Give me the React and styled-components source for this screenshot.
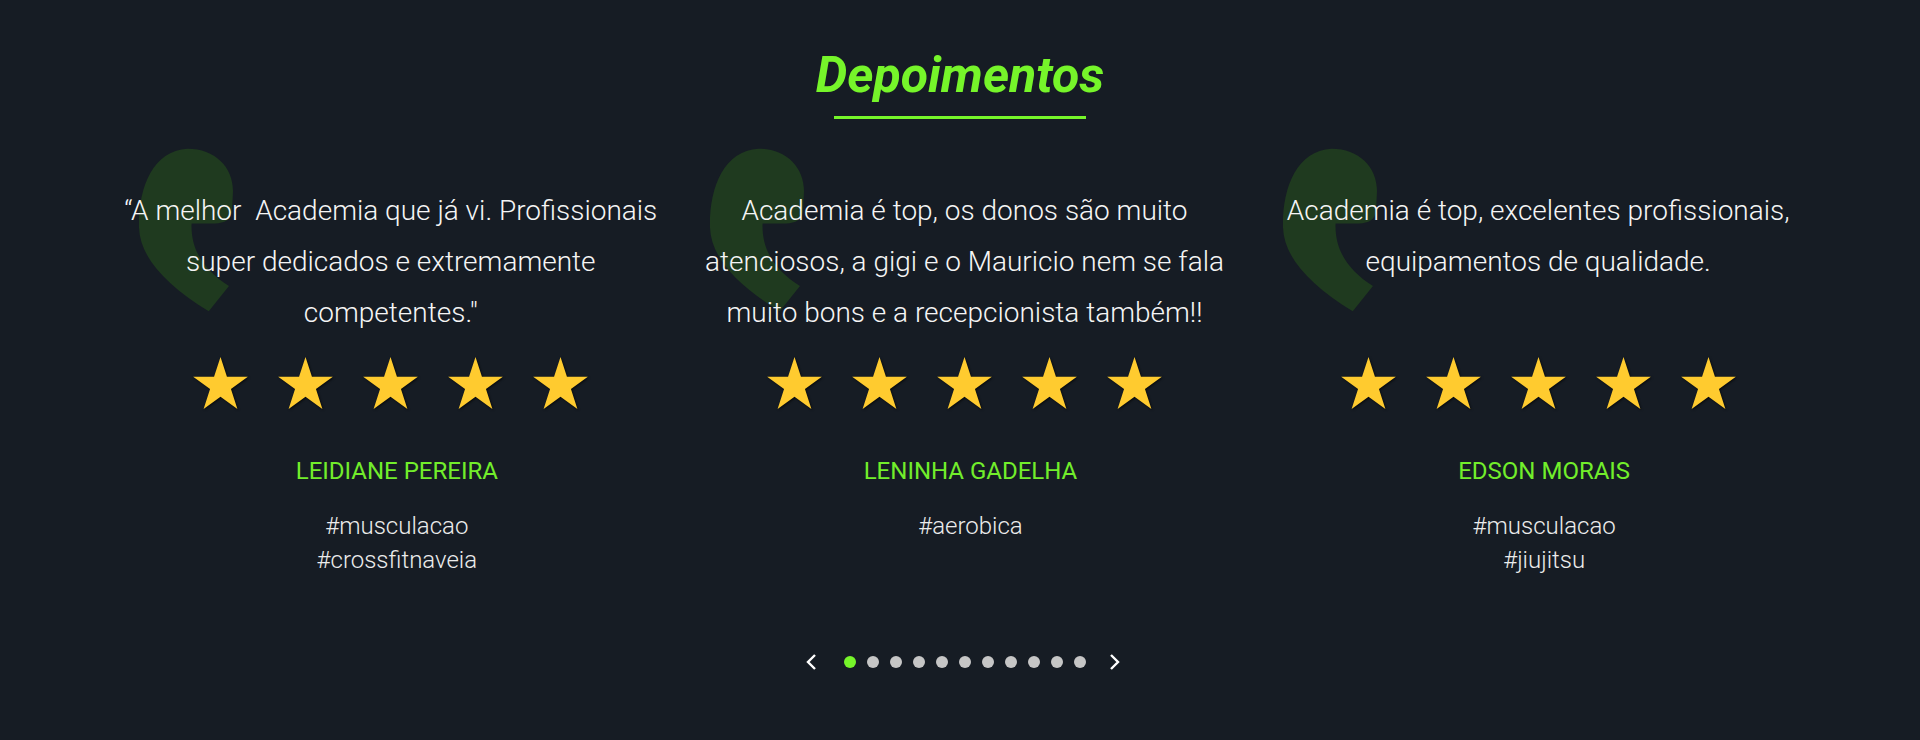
import React from "react";
import styled, { createGlobalStyle } from "styled-components";

const GlobalStyle = createGlobalStyle`
  html, body {
    margin: 0;
    padding: 0;
    background: #161c24;
  }
  body {
    font-family: Roboto, "Liberation Sans", sans-serif;
  }
`;

const Section = styled.section`
  width: 1920px;
  height: 740px;
  background: #161c24;
  box-sizing: border-box;
  padding-top: 47px;
  overflow: hidden;
`;

const Header = styled.div`
  display: flex;
  flex-direction: column;
  align-items: center;
`;

const Title = styled.h2`
  margin: 0;
  font-family: Roboto, sans-serif;
  font-size: 50px;
  line-height: 56px;
  font-weight: 700;
  font-style: italic;
  color: #76f52a;
`;

const Underline = styled.div`
  width: 252px;
  height: 3px;
  margin-top: 13px;
  background: #76f52a;
`;

const Container = styled.div`
  width: 1721px;
  margin-left: 104px;
`;

const Columns = styled.div`
  display: grid;
  grid-template-columns: repeat(3, 1fr);
  margin-top: 66px;
`;

const Card = styled.div`
  position: relative;
  display: flex;
  flex-direction: column;
  align-items: center;
`;

const QuoteMark = styled.svg`
  position: absolute;
  top: -37px;
  left: ${props => props.offset}px;
  width: 95px;
  height: 164px;
  z-index: 0;
`;

const Text = styled.p`
  position: relative;
  z-index: 1;
  margin: 0;
  max-width: 560px;
  min-height: 153px;
  font-size: 28px;
  line-height: 51px;
  font-weight: 300;
  color: #f5f5f5;
  text-align: center;
`;

const Stars = styled.div`
  display: flex;
  gap: 30px;
  margin-top: 19px;
  height: 52px;
`;

const Star = styled.svg`
  width: 55px;
  height: 52px;
  overflow: visible;
  filter: drop-shadow(1px 1px 1px rgba(0, 0, 0, 0.65));
`;

const Author = styled.div`
  display: flex;
  flex-direction: column;
  align-items: center;
  padding-left: 12px;
  margin-top: 48px;
`;

const Name = styled.span`
  font-size: 24px;
  line-height: 28px;
  font-weight: 400;
  color: #72ee2b;
  text-transform: uppercase;
`;

const Tags = styled.div`
  margin-top: 24px;
  display: flex;
  flex-direction: column;
  align-items: center;
`;

const Tag = styled.span`
  font-size: 24px;
  line-height: 34px;
  font-weight: 300;
  color: #ececec;
`;

const Pager = styled.div`
  display: flex;
  justify-content: center;
  align-items: center;
  margin-top: 76px;
  padding-right: 3px;
  height: 18px;
`;

const Arrow = styled.svg`
  width: 12px;
  height: 18px;
  margin: ${props => (props.right ? "0 0 0 23px" : "0 27px 0 0")};
`;

const Dots = styled.div`
  display: flex;
  gap: 11px;
`;

const Dot = styled.span`
  width: 12px;
  height: 12px;
  border-radius: 50%;
  background: ${props => (props.active ? "#76f52a" : "#c6c6c6")};
`;

const testimonials = [
  {
    text: "“A melhor\u00a0 Academia que já vi. Profissionais super dedicados e extremamente competentes.\"",
    name: "Leidiane Pereira",
    tags: ["#musculacao", "#crossfitnaveia"],
    quote: 34,
  },
  {
    text: "Academia é top, os donos são muito atenciosos, a gigi e o Mauricio nem se fala muito bons e a recepcionista também!!",
    name: "Leninha Gadelha",
    tags: ["#aerobica"],
    quote: 31,
  },
  {
    text: "Academia é top, excelentes profissionais, equipamentos de qualidade.",
    name: "Edson Morais",
    tags: ["#musculacao", "#jiujitsu"],
    quote: 31,
  },
];

const StarIcon = () => (
  <Star viewBox="0 0 55 52.3">
    <polygon
      fill="#ffcb2f"
      points="27.5,0 33.99,19.97 55,19.97 38,32.31 44.49,52.28 27.5,39.94 10.51,52.28 17,32.31 0,19.97 21.01,19.97"
    />
  </Star>
);

const Quote = ({ offset }) => (
  <QuoteMark offset={offset} viewBox="0 0 94 161">
    <path
      fill="#1f3a1f"
      d="M49 0 C76 0 94 18 94 42 L93 62 C92 70 86 74 76 74 L53 74 C52 100 65 120 90 136 L70 161 C28 135 2 108 1 78 C0 40 14 2 49 0 Z"
    />
  </QuoteMark>
);

const App = () => (
  <>
    <GlobalStyle />
    <Section>
      <Header>
        <Title>Depoimentos</Title>
        <Underline />
      </Header>
      <Container>
        <Columns>
          {testimonials.map(item => (
            <Card key={item.name}>
              <Quote offset={item.quote} />
              <Text>{item.text}</Text>
              <Stars>
                {[0, 1, 2, 3, 4].map(i => (
                  <StarIcon key={i} />
                ))}
              </Stars>
              <Author>
                <Name>{item.name}</Name>
                <Tags>
                  {item.tags.map(tag => (
                    <Tag key={tag}>{tag}</Tag>
                  ))}
                </Tags>
              </Author>
            </Card>
          ))}
        </Columns>
        <Pager>
          <Arrow viewBox="0 0 12 18">
            <polyline points="10,2 3,9 10,16" fill="none" stroke="#ffffff" strokeWidth="2.4" />
          </Arrow>
          <Dots>
            {Array.from({ length: 11 }).map((_, i) => (
              <Dot key={i} active={i === 0} />
            ))}
          </Dots>
          <Arrow right viewBox="0 0 12 18">
            <polyline points="2,2 9,9 2,16" fill="none" stroke="#ffffff" strokeWidth="2.4" />
          </Arrow>
        </Pager>
      </Container>
    </Section>
  </>
);

export default App;
